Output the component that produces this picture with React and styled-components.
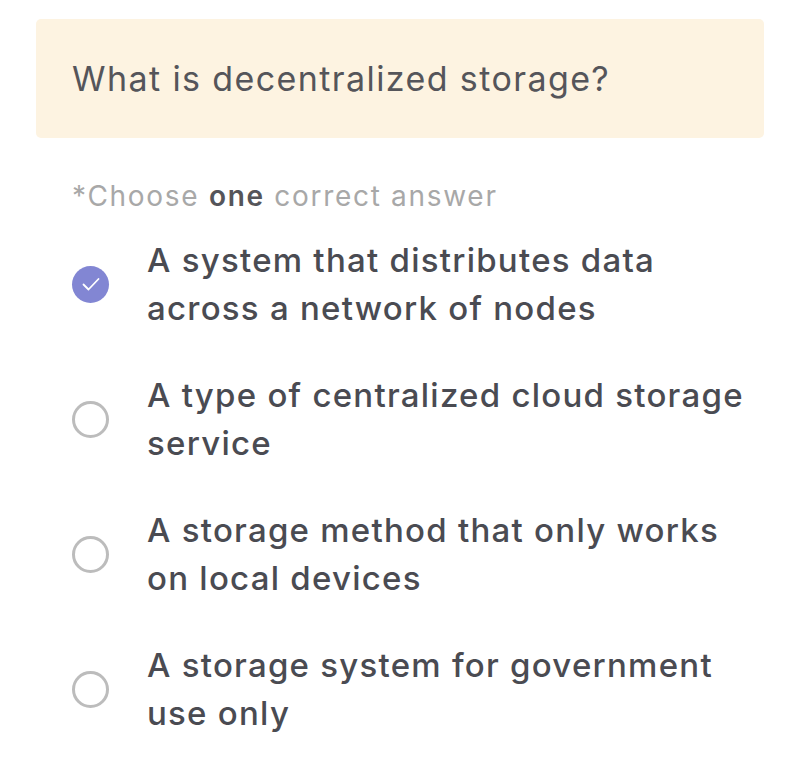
import React, { useState } from "react";
import styled, { createGlobalStyle } from "styled-components";

const GlobalStyle = createGlobalStyle`
  html, body {
    margin: 0;
    padding: 0;
    background: #ffffff;
  }
  body {
    font-family: Inter, "Noto Sans", sans-serif;
  }
`;

const Page = styled.div`
  width: 800px;
  height: 757px;
  padding: 19px 36px 0 36px;
  box-sizing: border-box;
  background: #ffffff;
`;

const QuestionCard = styled.div`
  background: #fdf3e1;
  border-radius: 5px;
  height: 119px;
  padding: 0 36px;
  display: flex;
  align-items: center;
`;

const QuestionText = styled.h2`
  margin: 0;
  font-size: 34px;
  font-weight: 400;
  color: #55555a;
  letter-spacing: 1.4px;
`;

const Hint = styled.p`
  margin: 40px 0 0 36px;
  font-size: 28px;
  color: #a8a8a8;
  font-weight: 400;
  line-height: 36px;
  letter-spacing: 1.7px;

  strong {
    color: #55555a;
    font-weight: 600;
  }
`;

const Options = styled.ul`
  list-style: none;
  margin: 22px 0 0 0;
  padding: 0 0 0 36px;
  display: flex;
  flex-direction: column;
  gap: 39px;
`;

const Option = styled.li`
  display: flex;
  align-items: center;
  gap: 38px;
  cursor: pointer;
`;

const Radio = styled.span`
  flex-shrink: 0;
  width: 37px;
  height: 37px;
  border-radius: 50%;
  box-sizing: border-box;
  display: inline-flex;
  align-items: center;
  justify-content: center;
  background: ${(p) => (p.$checked ? "#8286d3" : "transparent")};
  border: ${(p) => (p.$checked ? "none" : "3px solid #bcbcbc")};
`;

const OptionText = styled.span`
  font-size: 33px;
  font-weight: 500;
  line-height: 48px;
  color: #4a4b52;
  letter-spacing: 1.25px;
  max-width: 610px;
`;

const answers = [
  "A system that distributes data across a network of nodes",
  "A type of centralized cloud storage service",
  "A storage method that only works on local devices",
  "A storage system for government use only",
];

const Check = () => (
  <svg width="24" height="24" viewBox="0 0 24 24" fill="none">
    <path
      d="M4.5 12.5l5 5L19.5 7"
      stroke="#ffffff"
      strokeWidth="1.8"
      strokeLinecap="round"
      strokeLinejoin="round"
    />
  </svg>
);

const App = () => {
  const [selected, setSelected] = useState(0);

  return (
    <Page>
      <GlobalStyle />
      <QuestionCard>
        <QuestionText>What is decentralized storage?</QuestionText>
      </QuestionCard>
      <Hint>
        *Choose <strong>one</strong> correct answer
      </Hint>
      <Options>
        {answers.map((answer, i) => (
          <Option key={answer} onClick={() => setSelected(i)}>
            <Radio $checked={selected === i}>{selected === i && <Check />}</Radio>
            <OptionText>{answer}</OptionText>
          </Option>
        ))}
      </Options>
    </Page>
  );
};

export default App;
